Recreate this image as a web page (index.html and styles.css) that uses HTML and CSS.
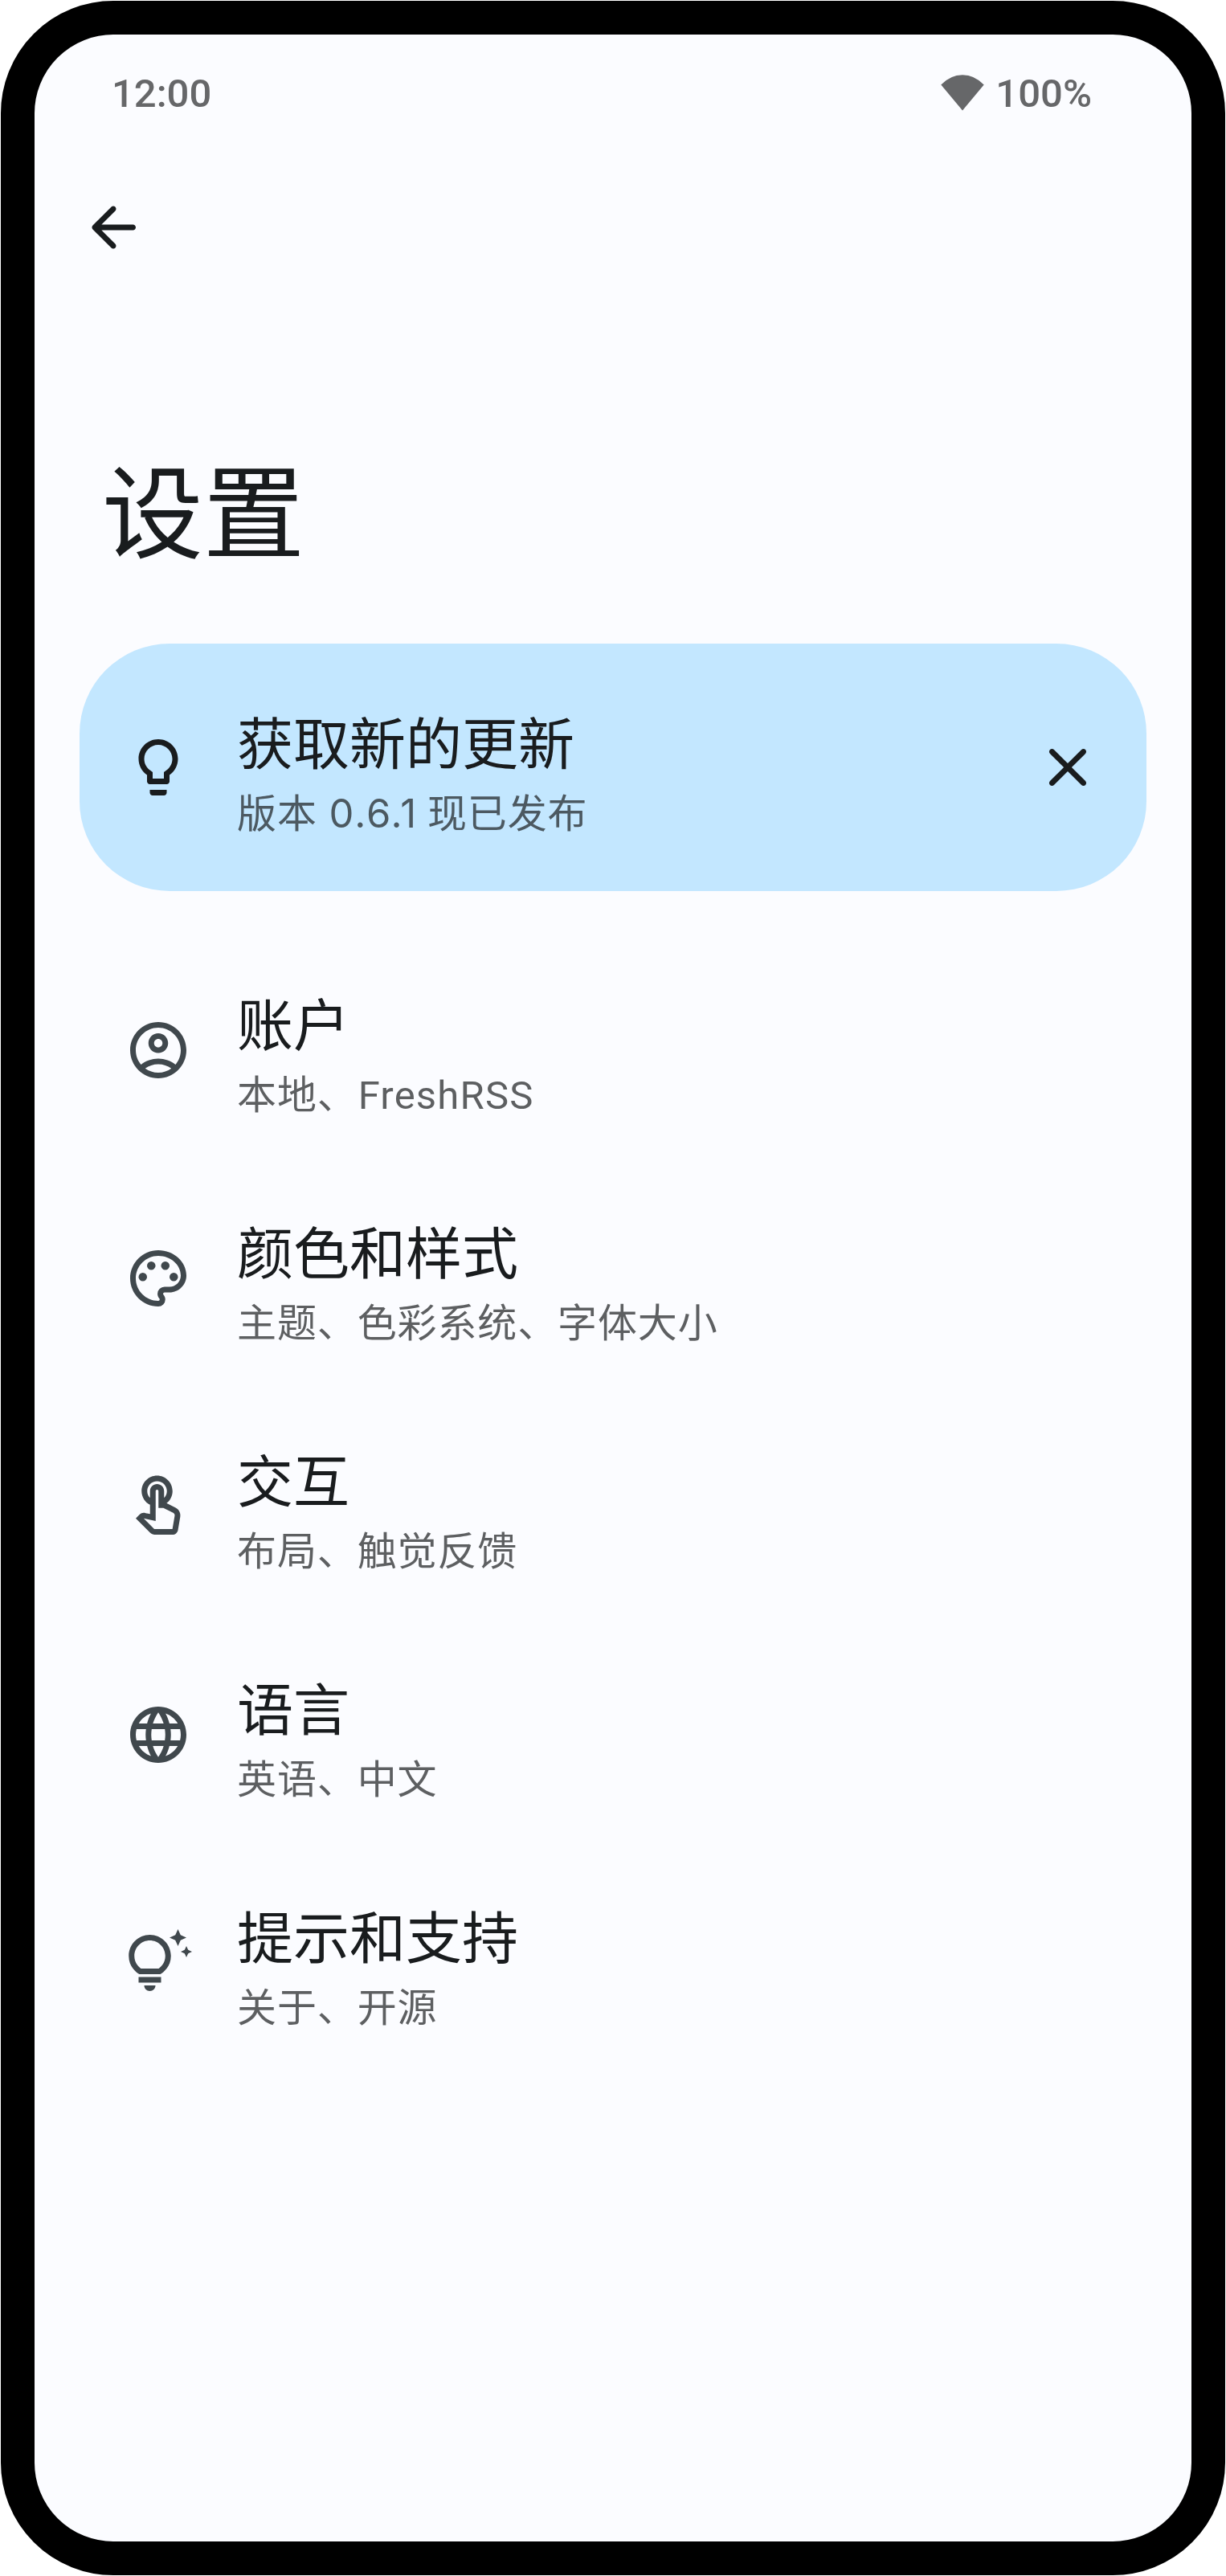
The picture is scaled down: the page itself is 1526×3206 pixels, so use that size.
FILE: index.html
```html
<!DOCTYPE html>
<html lang="zh-CN">
<head>
<meta charset="utf-8">
<title>设置</title>
<link rel="stylesheet" href="styles.css">
</head>
<body>
<main class="phone">
  <div class="status-bar">
    <span class="clock">12:00</span>
    <div class="status-right">
      <svg class="wifi" viewBox="0 0 54 45"><path d="M0.3 12.6Q12 .3 27 .3T53.700 12.6L27 44.500Z"/></svg>
      <span class="battery">100%</span>
    </div>
  </div>
  <header class="top-bar">
    <svg class="icon icon-dark" viewBox="0 0 24 24"><path d="M19 11H7.830l4.880-4.880c.39-.39.39-1.030 0-1.420-.39-.39-1.020-.39-1.410 0l-6.590 6.590c-.39.39-.39 1.020 0 1.410l6.590 6.590c.39.39 1.020.39 1.410 0 .39-.39.39-1.020 0-1.410L7.830 13H19c.55 0 1-.45 1-1s-.45-1-1-1z"/></svg>
  </header>
  <h1 class="title">设置</h1>
  <section class="banner">
    <svg class="icon icon-dark" viewBox="0 0 24 24"><path d="M9 21c0 .55.45 1 1 1h4c.55 0 1-.45 1-1v-1H9v1zm3-19C8.140 2 5 5.140 5 9c0 2.380 1.190 4.470 3 5.740V17c0 .55.45 1 1 1h6c.55 0 1-.45 1-1v-2.260c1.810-1.270 3-3.360 3-5.740 0-3.860-3.140-7-7-7zm2.850 11.100l-.85.6V16h-4v-2.300l-.85-.6C7.800 12.160 7 10.630 7 9c0-2.760 2.240-5 5-5s5 2.240 5 5c0 1.630-.8 3.160-2.150 4.100z"/></svg>
    <div class="texts">
      <h2 class="name">获取新的更新</h2>
      <p class="desc">版本 <span class="version">0.6.1</span> 现已发布</p>
    </div>
    <svg class="icon icon-dark" viewBox="0 0 24 24"><path d="M18.300 5.710c-.39-.39-1.020-.39-1.410 0L12 10.590 7.110 5.700c-.39-.39-1.020-.39-1.410 0-.39.39-.39 1.020 0 1.410L10.590 12 5.700 16.890c-.39.39-.39 1.020 0 1.410.39.39 1.020.39 1.410 0L12 13.410l4.890 4.890c.39.39 1.020.39 1.410 0 .39-.39.39-1.020 0-1.410L13.410 12l4.890-4.890c.38-.38.38-1.020 0-1.400z"/></svg>
  </section>
  <ul class="list">
    <li class="item">
      <svg class="icon" viewBox="0 0 24 24"><path d="M12 2C6.480 2 2 6.480 2 12s4.480 10 10 10 10-4.480 10-10S17.520 2 12 2zM7.350 18.500C8.660 17.560 10.260 17 12 17s3.340.56 4.650 1.500c-1.310.94-2.910 1.500-4.650 1.500s-3.340-.56-4.650-1.500zm10.790-1.380C16.450 15.800 14.320 15 12 15s-4.450.8-6.140 2.120C4.700 15.730 4 13.950 4 12c0-4.420 3.580-8 8-8s8 3.580 8 8c0 1.950-.7 3.730-1.860 5.120zM12 6c-1.930 0-3.500 1.570-3.500 3.500S10.070 13 12 13s3.500-1.570 3.500-3.500S13.930 6 12 6zm0 5c-.83 0-1.500-.67-1.500-1.500S11.170 8 12 8s1.500.67 1.500 1.500S12.830 11 12 11z"/></svg>
      <div class="texts"><h2 class="name">账户</h2><p class="desc">本地、<span class="latin">FreshRSS</span></p></div>
    </li>
    <li class="item">
      <svg class="icon" viewBox="0 0 24 24"><path d="M12 22C6.490 22 2 17.510 2 12S6.490 2 12 2s10 4.040 10 9c0 3.310-2.690 6-6 6h-1.770c-.28 0-.5.22-.5.5 0 .12.05.23.13.33.41.47.64 1.060.64 1.670A2.500 2.500 0 0 1 12 22zm0-18c-4.410 0-8 3.590-8 8s3.590 8 8 8c.28 0 .5-.22.5-.5a.54.54 0 0 0-.14-.35c-.41-.46-.63-1.050-.63-1.650a2.500 2.500 0 0 1 2.500-2.500H16c2.210 0 4-1.790 4-4 0-3.860-3.590-7-8-7z"/><circle cx="6.500" cy="11.500" r="1.500"/><circle cx="9.500" cy="7.500" r="1.500"/><circle cx="14.500" cy="7.500" r="1.500"/><circle cx="17.500" cy="11.500" r="1.500"/></svg>
      <div class="texts"><h2 class="name">颜色和样式</h2><p class="desc">主题、色彩系统、字体大小</p></div>
    </li>
    <li class="item">
      <svg class="icon" viewBox="0 0 24 24"><path d="M18.190 12.440l-3.240-1.620c1.290-1 2.120-2.560 2.120-4.320 0-3.030-2.470-5.500-5.500-5.500s-5.500 2.470-5.500 5.500c0 2.130 1.220 3.980 3 4.890v3.260c-2.150-.46-2.020-.44-2.260-.44-.53 0-1.030.21-1.410.59L4 16.220l5.090 5.090c.43.44 1.030.69 1.650.69h6.300c.98 0 1.810-.7 1.970-1.670l.8-4.710c.22-1.300-.43-2.580-1.620-3.180zm-.35 2.850l-.8 4.710h-6.300c-.09 0-.17-.04-.24-.1l-3.680-3.680 4.250.89V6.500c0-.28.22-.5.5-.5s.5.22.5.5v6h1.760l3.460 1.730c.4.2.62.63.55 1.060zM8.070 6.500c0-1.930 1.570-3.500 3.500-3.500s3.500 1.570 3.500 3.500c0 .95-.38 1.810-1 2.440V6.500c0-1.380-1.120-2.500-2.500-2.500s-2.500 1.120-2.500 2.500v2.440c-.62-.63-1-1.490-1-2.440z"/></svg>
      <div class="texts"><h2 class="name">交互</h2><p class="desc">布局、触觉反馈</p></div>
    </li>
    <li class="item">
      <svg class="icon" viewBox="0 0 24 24"><path d="M11.990 2C6.470 2 2 6.480 2 12s4.470 10 9.990 10C17.520 22 22 17.520 22 12S17.520 2 11.990 2zm6.930 6h-2.950c-.32-1.250-.78-2.450-1.380-3.560 1.840.63 3.370 1.910 4.330 3.560zM12 4.040c.83 1.200 1.480 2.530 1.910 3.960h-3.820c.43-1.430 1.080-2.760 1.910-3.960zM4.260 14C4.100 13.360 4 12.690 4 12s.1-1.360.26-2h3.380c-.08.66-.14 1.320-.14 2 0 .68.06 1.340.14 2H4.260zm.82 2h2.950c.32 1.250.78 2.450 1.380 3.560-1.840-.63-3.370-1.900-4.330-3.560zm2.950-8H5.080c.96-1.660 2.490-2.930 4.330-3.560C8.810 5.550 8.350 6.750 8.030 8zM12 19.960c-.83-1.200-1.480-2.530-1.910-3.960h3.820c-.43 1.430-1.080 2.760-1.910 3.960zM14.340 14H9.660c-.09-.66-.16-1.320-.16-2 0-.68.07-1.350.16-2h4.680c.09.65.16 1.320.16 2 0 .68-.07 1.340-.16 2zm.25 5.560c.6-1.110 1.060-2.310 1.380-3.560h2.950c-.96 1.650-2.490 2.930-4.330 3.560zM16.360 14c.08-.66.14-1.320.14-2 0-.68-.06-1.340-.14-2h3.380c.16.64.26 1.310.26 2s-.1 1.360-.26 2h-3.380z"/></svg>
      <div class="texts"><h2 class="name">语言</h2><p class="desc">英语、中文</p></div>
    </li>
    <li class="item">
      <svg class="icon" viewBox="0 0 24 24"><path d="M7 20h4c0 1.100-.9 2-2 2s-2-.9-2-2zm-2-1h8v-2H5v2zm11.500-9.500c0 3.820-2.660 5.860-3.770 6.500H5.270C4.160 15.360 1.500 13.320 1.500 9.500 1.500 5.360 4.860 2 9 2s7.500 3.360 7.500 7.500zm-2 0C14.500 6.470 12.030 4 9 4S3.500 6.470 3.500 9.500c0 2.470 1.490 3.890 2.350 4.500h6.300c.86-.61 2.350-2.030 2.350-4.500zm6.870-2.130L20 8l1.370.63L22 10l.63-1.370L24 8l-1.370-.63L22 6l-.63 1.370zM19 6l.94-2.060L22 3l-2.060-.94L19 0l-.94 2.060L16 3l2.060.94L19 6z"/></svg>
      <div class="texts"><h2 class="name">提示和支持</h2><p class="desc">关于、开源</p></div>
    </li>
  </ul>
</main>
</body>
</html>
```
FILE: styles.css
```css
* {
  box-sizing: border-box;
  margin: 0;
  padding: 0;
}

body {
  padding: 1px;
  background: #fff;
  font-family: "Noto Sans CJK SC", sans-serif;
  color: #191c1e;
}

.phone {
  width: 1524px;
  height: 3204px;
  border: 42px solid #000;
  border-radius: 140px;
  background: #fbfcff;
}

.status-bar {
  display: flex;
  justify-content: space-between;
  align-items: center;
  height: 148px;
  padding: 0 124px 0 96px;
  font: 500 49px/58px Roboto, sans-serif;
  color: #666769;
}

.status-right {
  display: flex;
  align-items: center;
  gap: 14px;
}

.wifi {
  width: 54px;
  height: 45px;
  margin-top: -4px;
  fill: #666769;
}

.top-bar {
  display: flex;
  height: 184px;
  padding: 50px 56px 0;
}

.icon {
  flex: none;
  width: 84px;
  height: 84px;
  fill: #40484d;
}

.icon-dark {
  fill: #191c1e;
}

.title {
  height: 426px;
  padding: 178px 84px 0;
  font-size: 126px;
  font-weight: 400;
  line-height: 154px;
}

.banner {
  display: flex;
  align-items: center;
  gap: 56px;
  height: 308px;
  margin: 0 56px;
  padding: 0 56px;
  border-radius: 112px;
  background: #c3e7ff;
}

.texts {
  flex: 1;
  padding-top: 3px;
}

.banner .texts {
  padding-top: 7px;
}

.name {
  font-size: 70px;
  font-weight: 400;
  line-height: 98px;
}

.desc {
  margin-top: 3px;
  font-size: 49px;
  line-height: 70px;
  letter-spacing: 0.875px;
  color: rgba(25, 28, 30, 0.7);
}

.version {
  margin-left: 3px;
  font-family: Inter, sans-serif;
  line-height: 0;
  letter-spacing: 1.875px;
}

.latin {
  margin-left: 1px;
  font-family: Roboto, sans-serif;
  line-height: 0;
  letter-spacing: 1.2px;
}

.list {
  padding-top: 56px;
  list-style: none;
}

.item {
  display: flex;
  align-items: center;
  gap: 56px;
  height: 284px;
  padding: 0 112px;
}
```
